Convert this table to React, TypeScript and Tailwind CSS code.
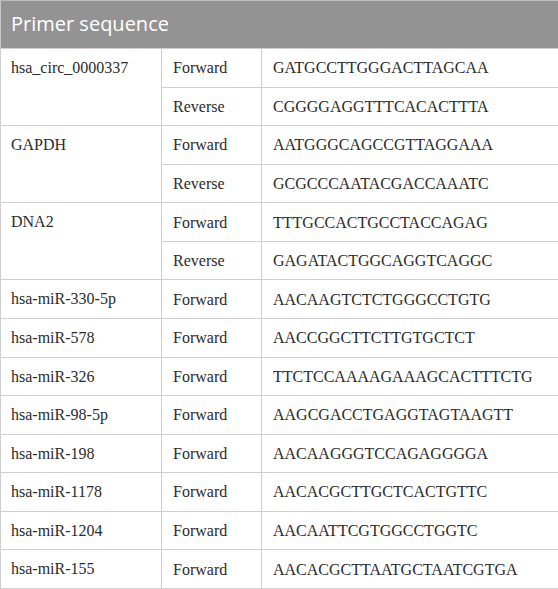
import React from "react";

type Row = { name?: string; span?: number; dir: string; seq: string };

const rows: Row[] = [
  { name: "hsa_circ_0000337", span: 2, dir: "Forward", seq: "GATGCCTTGGGACTTAGCAA" },
  { dir: "Reverse", seq: "CGGGGAGGTTTCACACTTTA" },
  { name: "GAPDH", span: 2, dir: "Forward", seq: "AATGGGCAGCCGTTAGGAAA" },
  { dir: "Reverse", seq: "GCGCCCAATACGACCAAATC" },
  { name: "DNA2", span: 2, dir: "Forward", seq: "TTTGCCACTGCCTACCAGAG" },
  { dir: "Reverse", seq: "GAGATACTGGCAGGTCAGGC" },
  { name: "hsa-miR-330-5p", span: 1, dir: "Forward", seq: "AACAAGTCTCTGGGCCTGTG" },
  { name: "hsa-miR-578", span: 1, dir: "Forward", seq: "AACCGGCTTCTTGTGCTCT" },
  { name: "hsa-miR-326", span: 1, dir: "Forward", seq: "TTCTCCAAAAGAAAGCACTTTCTG" },
  { name: "hsa-miR-98-5p", span: 1, dir: "Forward", seq: "AAGCGACCTGAGGTAGTAAGTT" },
  { name: "hsa-miR-198", span: 1, dir: "Forward", seq: "AACAAGGGTCCAGAGGGGA" },
  { name: "hsa-miR-1178", span: 1, dir: "Forward", seq: "AACACGCTTGCTCACTGTTC" },
  { name: "hsa-miR-1204", span: 1, dir: "Forward", seq: "AACAATTCGTGGCCTGGTC" },
  { name: "hsa-miR-155", span: 1, dir: "Forward", seq: "AACACGCTTAATGCTAATCGTGA" },
];

export default function App() {
  return (
    <div className="w-[558px] h-[589px] bg-white overflow-hidden">
      <table
        className="w-[558px] table-fixed border-collapse text-[#2b2b2b]"
        style={{ fontFamily: '"Liberation Serif", "Times New Roman", serif' }}
      >
        <colgroup>
          <col className="w-[161px]" />
          <col className="w-[100px]" />
          <col className="w-[297px]" />
        </colgroup>
        <thead>
          <tr className="h-[48px]">
            <th
              colSpan={3}
              className="bg-[#939393] border-t border-t-[#bdbdbd] border-x border-x-[#c8c8c8] text-left align-middle pl-[10px] pb-[2px] text-white text-[20px] font-normal"
              style={{ fontFamily: '"Open Sans", "Noto Sans", sans-serif' }}
            >
              Primer sequence
            </th>
          </tr>
        </thead>
        <tbody className="text-[16px] leading-[20px]">
          {rows.map((r, i) => (
            <tr key={i} className="h-[38.57px]">
              {r.name !== undefined && (
                <td
                  rowSpan={r.span}
                  className="border border-[#cfcfcf] align-top pl-[10px] pt-[9px]"
                >
                  {r.name}
                </td>
              )}
              <td className="border border-[#cfcfcf] align-middle pl-[11px] pt-[1px]">{r.dir}</td>
              <td className="border border-[#cfcfcf] align-middle pl-[11px] pt-[1px]">{r.seq}</td>
            </tr>
          ))}
        </tbody>
      </table>
    </div>
  );
}
